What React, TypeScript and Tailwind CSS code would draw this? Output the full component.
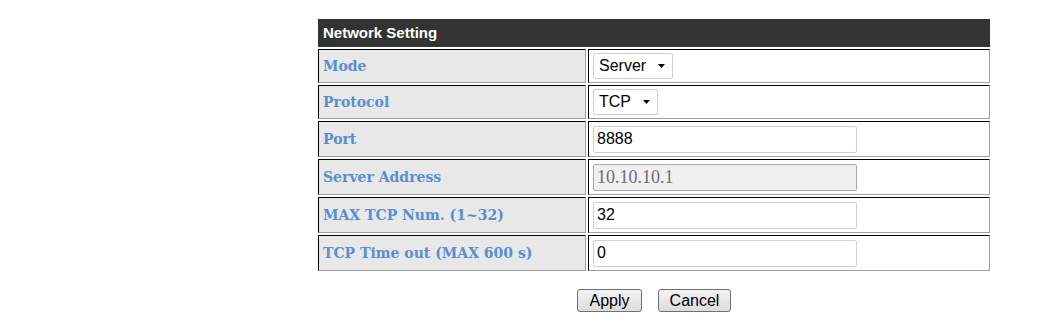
import React from 'react'

const labelFont = { fontFamily: '"DejaVu Serif", Georgia, serif' }

function Cell({ children, className = '' }: { children: React.ReactNode; className?: string }) {
  return (
    <div
      className={`flex items-center border border-t-black border-l-black border-b-[#a0a0a0] border-r-[#a0a0a0] ${className}`}
    >
      {children}
    </div>
  )
}

function Row({ label, tall = true, children }: { label: string; tall?: boolean; children: React.ReactNode }) {
  return (
    <div className={`flex gap-[2px] ${tall ? 'h-[36px]' : 'h-[34px]'}`}>
      <Cell className="w-[268px] bg-[#e8e8e8] pl-[4px] pt-[1px]">
        <span style={labelFont} className="text-[14px] font-bold text-[#5b8ed0]">{label}</span>
      </Cell>
      <Cell className="flex-1 bg-white pl-[4px]">{children}</Cell>
    </div>
  )
}

function FakeSelect({ value, width }: { value: string; width: string }) {
  return (
    <div className={`flex h-[26px] items-center justify-between rounded-[2px] border border-[#d0d0d0] bg-white pl-[5px] pr-[7px] ${width}`}>
      <span className="text-[16px] text-black">{value}</span>
      <svg width="7" height="4" viewBox="0 0 7 4">
        <path d="M0 0h7L3.5 4z" fill="#000" />
      </svg>
    </div>
  )
}

function TextBox({ value, disabled }: { value: string; disabled?: boolean }) {
  return (
    <input
      readOnly
      disabled={disabled}
      value={value}
      style={disabled ? { fontFamily: '"Liberation Serif", serif' } : undefined}
      className={`h-[27px] w-[264px] rounded-[2px] border px-[3px] outline-none ${
        disabled
          ? 'border-[#a8a8a8] bg-[#f0f0f0] text-[18px] text-[#6d6d6d]'
          : 'border-[#d0d0d0] bg-white text-[16px] text-black'
      }`}
    />
  )
}

export default function App() {
  return (
    <div
      className="h-[323px] w-[1049px] bg-white pl-[318px] pt-[19px]"
      style={{ fontFamily: '"Liberation Sans", Arial, sans-serif' }}
    >
      <div className="flex w-[672px] flex-col gap-[2px]">
        <div className="flex h-[28px] items-center bg-[#333333] pl-[5px] text-[15px] font-bold text-white">
          Network Setting
        </div>
        <Row label="Mode" tall={false}>
          <FakeSelect value="Server" width="w-[80px]" />
        </Row>
        <Row label="Protocol" tall={false}>
          <FakeSelect value="TCP" width="w-[65px]" />
        </Row>
        <Row label="Port">
          <TextBox value="8888" />
        </Row>
        <Row label="Server Address">
          <TextBox value="10.10.10.1" disabled />
        </Row>
        <Row label="MAX TCP Num. (1~32)">
          <TextBox value="32" />
        </Row>
        <Row label="TCP Time out (MAX 600 s)">
          <TextBox value="0" />
        </Row>
      </div>
      <div className="mt-[18px] flex w-[672px] justify-center gap-[16px]">
        <button className="h-[23px] w-[65px] rounded-[3px] border border-[#707070] bg-gradient-to-b from-[#f4f4f4] to-[#dcdcdc] text-[16px] leading-none text-black">
          Apply
        </button>
        <button className="h-[23px] w-[73px] rounded-[3px] border border-[#707070] bg-gradient-to-b from-[#f4f4f4] to-[#dcdcdc] text-[16px] leading-none text-black">
          Cancel
        </button>
      </div>
    </div>
  )
}
